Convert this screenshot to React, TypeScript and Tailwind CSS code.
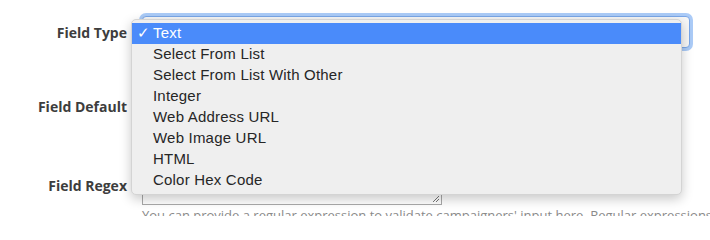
const options = [
  "Text",
  "Select From List",
  "Select From List With Other",
  "Integer",
  "Web Address URL",
  "Web Image URL",
  "HTML",
  "Color Hex Code",
];

function Label({ children }: { children: React.ReactNode }) {
  return (
    <label className="w-[128px] shrink-0 pr-[1px] text-right text-[14px] font-bold text-[#3d3d3d] [font-family:'Open_Sans',sans-serif]">
      {children}
    </label>
  );
}

function SelectMenu() {
  return (
    <div className="absolute left-[131px] top-[19px] w-[551px] rounded-[5px] border border-[#d4d4d4] bg-[#efefef] pt-[3px] pb-[3px] shadow-[0_4px_12px_rgba(0,0,0,0.22)] [font-family:'Liberation_Sans',Arial,sans-serif]">
      {options.map((opt, i) => (
        <div
          key={opt}
          className={
            i === 0
              ? "flex h-[21px] items-center bg-[#4a8bfa] text-[15px] tracking-[0.2px] text-white"
              : "flex h-[21px] items-center text-[15px] tracking-[0.2px] text-[#262626]"
          }
        >
          <span className="w-[21px] pl-[5px] text-[15px]">{i === 0 ? "✓" : ""}</span>
          {opt}
        </div>
      ))}
    </div>
  );
}

export default function App() {
  return (
    <div className="relative h-[216px] w-[710px] overflow-hidden bg-white">
      <div className="pt-[16px]">
        <div className="flex items-center">
          <Label>Field Type</Label>
          <div className="ml-[14px] h-[32px] w-[548px] rounded-[4px] border border-[#7aa7e8] bg-[#f7f7f7] shadow-[0_0_0_3px_rgba(102,160,240,0.55)]" />
        </div>

        <div className="mt-[42px] flex items-center">
          <Label>Field Default</Label>
          <div className="ml-[14px] h-[32px] w-[300px] rounded-[4px] border border-[#ccc] bg-white" />
        </div>

        <div className="mt-[43px] flex items-center">
          <Label>Field Regex</Label>
          <div className="relative ml-[14px] h-[40px] w-[300px] border border-[#a9a9a9] bg-white">
            <svg className="absolute bottom-[1px] right-[1px]" width="8" height="8" viewBox="0 0 8 8">
              <path d="M7 1L1 7M7 4L4 7" stroke="#777" strokeWidth="1" />
            </svg>
          </div>
        </div>

        <p className="ml-[142px] mt-[1px] whitespace-nowrap text-[13px] leading-[18px] text-[#8a8a8a] [font-family:'Open_Sans',sans-serif]">
          You can provide a regular expression to validate campaigners' input here. Regular expressions
        </p>
      </div>

      <SelectMenu />
    </div>
  );
}
